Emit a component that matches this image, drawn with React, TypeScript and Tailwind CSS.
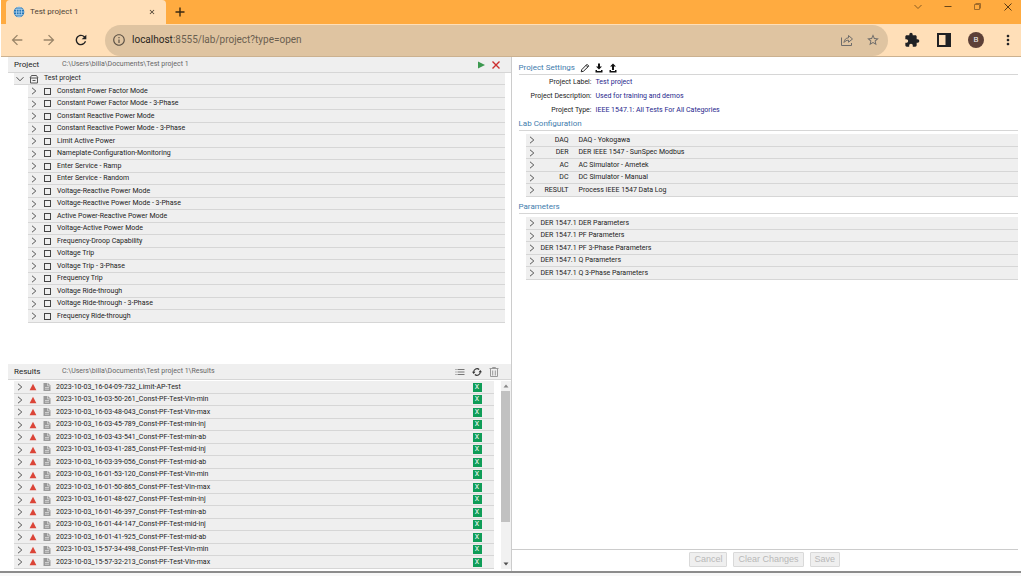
import type { ReactNode } from 'react'
import {
  MdArrowBack,
  MdArrowForward,
  MdClose,
  MdExtension,
  MdInfoOutline,
  MdMoreVert,
  MdRefresh,
  MdStarBorder,
} from 'react-icons/md'

const TESTS = [
  'Constant Power Factor Mode',
  'Constant Power Factor Mode - 3-Phase',
  'Constant Reactive Power Mode',
  'Constant Reactive Power Mode - 3-Phase',
  'Limit Active Power',
  'Nameplate-Configuration-Monitoring',
  'Enter Service - Ramp',
  'Enter Service - Random',
  'Voltage-Reactive Power Mode',
  'Voltage-Reactive Power Mode - 3-Phase',
  'Active Power-Reactive Power Mode',
  'Voltage-Active Power Mode',
  'Frequency-Droop Capability',
  'Voltage Trip',
  'Voltage Trip - 3-Phase',
  'Frequency Trip',
  'Voltage Ride-through',
  'Voltage Ride-through - 3-Phase',
  'Frequency Ride-through',
]

const RESULTS = [
  '2023-10-03_16-04-09-732_Limit-AP-Test',
  '2023-10-03_16-03-50-261_Const-PF-Test-Vin-min',
  '2023-10-03_16-03-48-043_Const-PF-Test-Vin-max',
  '2023-10-03_16-03-45-789_Const-PF-Test-min-inj',
  '2023-10-03_16-03-43-541_Const-PF-Test-min-ab',
  '2023-10-03_16-03-41-285_Const-PF-Test-mid-inj',
  '2023-10-03_16-03-39-056_Const-PF-Test-mid-ab',
  '2023-10-03_16-01-53-120_Const-PF-Test-Vin-min',
  '2023-10-03_16-01-50-865_Const-PF-Test-Vin-max',
  '2023-10-03_16-01-48-627_Const-PF-Test-min-inj',
  '2023-10-03_16-01-46-397_Const-PF-Test-min-ab',
  '2023-10-03_16-01-44-147_Const-PF-Test-mid-inj',
  '2023-10-03_16-01-41-925_Const-PF-Test-mid-ab',
  '2023-10-03_15-57-34-498_Const-PF-Test-Vin-min',
  '2023-10-03_15-57-32-213_Const-PF-Test-Vin-max',
]

const SETTINGS = [
  { label: 'Project Label:', value: 'Test project' },
  { label: 'Project Description:', value: 'Used for training and demos' },
  { label: 'Project Type:', value: 'IEEE 1547.1: All Tests For All Categories' },
]

const LAB = [
  { type: 'DAQ', name: 'DAQ - Yokogawa' },
  { type: 'DER', name: 'DER IEEE 1547 - SunSpec Modbus' },
  { type: 'AC', name: 'AC Simulator - Ametek' },
  { type: 'DC', name: 'DC Simulator - Manual' },
  { type: 'RESULT', name: 'Process IEEE 1547 Data Log' },
]

const PARAMETERS = [
  'DER 1547.1 DER Parameters',
  'DER 1547.1 PF Parameters',
  'DER 1547.1 PF 3-Phase Parameters',
  'DER 1547.1 Q Parameters',
  'DER 1547.1 Q 3-Phase Parameters',
]

function Expander({ name, open = false }: { name: string; open?: boolean }) {
  return (
    <button type="button" aria-label={`Expand ${name}`} aria-expanded={open} className="flex shrink-0">
      <svg className="h-2 w-2" viewBox="0 0 8 8" fill="none" stroke="#555" strokeWidth={1}>
        <path d={open ? 'M.5 2.2L4 5.8L7.5 2.2' : 'M2 .8L5.8 4L2 7.2'} />
      </svg>
    </button>
  )
}

function Row({ children }: { children: ReactNode }) {
  return (
    <li className="flex items-center border-b border-[#d6d6d6] bg-[#efefef] odd:h-[13px] even:h-3">
      {children}
    </li>
  )
}

function IconButton({ label, children }: { label: string; children: ReactNode }) {
  return (
    <button type="button" aria-label={label} className="flex shrink-0 items-center justify-center">
      {children}
    </button>
  )
}

function TitleBar() {
  return (
    <div className="flex h-6 bg-[#ffab40] pl-[5px]">
      <div className="flex w-40 items-center rounded-t bg-[#ffdfb8] pr-2.5 pl-[7px]">
        <svg className="h-3 w-3" viewBox="0 0 12 12">
          <circle cx="6" cy="6" r="5.3" fill="#2273b5" />
          <g fill="none" stroke="#c7e2f5" strokeWidth=".7">
            <ellipse cx="6" cy="6" rx="2.6" ry="5.3" />
            <path d="M6 .7V11.3M.7 6H11.3M1.6 3.3H10.4M1.6 8.7H10.4" />
          </g>
        </svg>
        <span className="ml-[5px] flex-1 text-[8px] text-[#4d4336]">Test project 1</span>
        <IconButton label="Close tab">
          <MdClose className="h-2 w-2 text-[#3c3226]" />
        </IconButton>
      </div>
      <button type="button" aria-label="New tab" className="ml-2">
        <svg className="h-3 w-3" viewBox="0 0 12 12" stroke="#3b2a12" strokeWidth={1.4}>
          <path d="M6 1.5V10.5M1.5 6H10.5" />
        </svg>
      </button>
      <div className="mr-2 ml-auto flex h-3.5 items-center gap-5">
        <IconButton label="Search tabs">
          <svg className="h-2.5 w-2.5" viewBox="0 0 10 10" fill="none" stroke="#8a5c22">
            <path d="M1.5 3L5 6.5L8.5 3" />
          </svg>
        </IconButton>
        <IconButton label="Minimize">
          <svg className="h-2.5 w-2.5" viewBox="0 0 10 10" stroke="#6b4719">
            <path d="M1.5 4.5H8.5" />
          </svg>
        </IconButton>
        <IconButton label="Restore">
          <svg className="h-2.5 w-2.5" viewBox="0 0 10 10" fill="none" stroke="#a06b2a">
            <path d="M1.5 2.5H6.5V7.5H1.5ZM2.5 1.5H7.5V6.5" />
          </svg>
        </IconButton>
        <IconButton label="Close">
          <svg className="h-2.5 w-2.5" viewBox="0 0 10 10" stroke="#5a3b14">
            <path d="M1.5 1.5L8.5 8.5M8.5 1.5L1.5 8.5" />
          </svg>
        </IconButton>
      </div>
    </div>
  )
}

function Toolbar() {
  return (
    <div className="flex h-[33px] items-center border-b border-[#cbb190] bg-[#ffdfb8] pr-[5px] pl-2">
      <div className="flex w-24 gap-4 text-[#9a8568]">
        <IconButton label="Back">
          <MdArrowBack className="h-4 w-4" />
        </IconButton>
        <IconButton label="Forward">
          <MdArrowForward className="h-4 w-4" />
        </IconButton>
        <IconButton label="Reload">
          <MdRefresh className="h-4 w-4 text-[#222]" />
        </IconButton>
      </div>
      <div className="flex h-[31px] flex-1 items-center rounded-full bg-[#dfc4a1] pr-2 pl-[7px]">
        <MdInfoOutline className="h-3.5 w-3.5 text-[#5b5145]" />
        <div className="ml-1.5 flex-1 text-[10px] leading-4">
          <span className="text-[#29241d]">localhost</span>
          <span className="text-[#6b5f50]">:8555/lab/project?type=open</span>
        </div>
        <div className="flex gap-3 text-[#6e6c6a]">
          <IconButton label="Share">
            <svg className="h-3.5 w-3.5" viewBox="0 0 14 14" fill="none" stroke="currentColor">
              <path d="M1.5 4.5V12.5H11.5V10M4 9.5C4.3 6.5 6 5 8.5 4.8V2.5L12.5 6L8.5 9.2V7.2C6.5 7.2 5.2 8 4 9.5Z" />
            </svg>
          </IconButton>
          <IconButton label="Bookmark">
            <MdStarBorder className="h-3.5 w-3.5" />
          </IconButton>
        </div>
      </div>
      <div className="ml-4 flex items-center gap-4 text-[#202124]">
        <IconButton label="Extensions">
          <MdExtension className="h-4 w-4" />
        </IconButton>
        <IconButton label="Side panel">
          <svg className="h-4 w-4" viewBox="0 0 16 16">
            <path fill="currentColor" fillRule="evenodd" d="M1 1H15V15H1ZM3 3V13H9.5V3Z" />
          </svg>
        </IconButton>
        <button
          type="button"
          className="h-4 w-4 rounded-full bg-[#5d4037] text-center text-[8px] leading-4 text-[#eee]"
        >
          B
        </button>
        <IconButton label="Menu">
          <MdMoreVert className="h-4 w-4" />
        </IconButton>
      </div>
    </div>
  )
}

function PanelHeader({ title, path, children }: { title: string; path: string; children: ReactNode }) {
  return (
    <div className="ml-2 flex h-4 items-center border-b border-[#d6d6d6] bg-[#efefef] pl-1.5">
      <h2 className="w-12 text-[8px]">{title}</h2>
      <span className="flex-1 text-[7px] text-[#666]">{path}</span>
      {children}
    </div>
  )
}

function ProjectPanel() {
  return (
    <section className="flex-1">
      <PanelHeader title="Project" path="C:\Users\billa\Documents\Test project 1">
        <div className="mr-2.5 flex gap-[5px]">
          <IconButton label="Run">
            <svg className="h-2.5 w-2.5" viewBox="0 0 10 10">
              <path fill="#3d9950" d="M2 1.5L9 5L2 8.5Z" />
            </svg>
          </IconButton>
          <IconButton label="Close project">
            <svg className="h-2.5 w-2.5" viewBox="0 0 10 10" stroke="#cc2f2f" strokeWidth={1.4}>
              <path d="M1.5 1.5L8.5 8.5M8.5 1.5L1.5 8.5" />
            </svg>
          </IconButton>
        </div>
      </PanelHeader>
      <div className="mr-1.5 ml-3.5">
        <div className="flex h-3 items-center border-b border-[#d6d6d6] bg-[#efefef] pl-0.5">
          <Expander name="Test project" open />
          <svg className="ml-[5px] h-2.5 w-2.5" viewBox="0 0 10 10" fill="none" stroke="#555">
            <path d="M2.5 1.5H7.5L9 4H1ZM1.5 4V9H8.5V4M3.5 6.5H6.5" />
          </svg>
          <span className="ml-[5px]">Test project</span>
        </div>
        <ul className="ml-3.5">
          {TESTS.map((test) => (
            <Row key={test}>
              <span className="ml-0.5 flex">
                <Expander name={test} />
              </span>
              <label className="ml-1.5 flex flex-1 items-center">
                <input type="checkbox" className="h-[7px] w-[7px] appearance-none border border-[#444]" />
                <span className="ml-1.5">{test}</span>
              </label>
            </Row>
          ))}
        </ul>
      </div>
    </section>
  )
}

function ResultsPanel() {
  return (
    <section className="pb-0.5">
      <PanelHeader title="Results" path="C:\Users\billa\Documents\Test project 1\Results">
        <div className="mr-3 flex gap-[7px]">
          <IconButton label="List view">
            <svg className="h-2.5 w-2.5" viewBox="0 0 10 10" stroke="#777">
              <path d="M.5 2.5H1.5M2.5 2.5H9.5M.5 5H1.5M2.5 5H9.5M.5 7.5H1.5M2.5 7.5H9.5" />
            </svg>
          </IconButton>
          <IconButton label="Refresh">
            <svg className="h-2.5 w-2.5" viewBox="0 0 10 10" fill="none" stroke="#333" strokeWidth={1.1}>
              <path d="M1.7 5A3.3 3.3 0 0 1 7.2 2.5M8.3 5A3.3 3.3 0 0 1 2.8 7.5" />
              <path fill="#333" stroke="none" d="M0 4.8H3.4L1.7 7ZM6.6 5.2H10L8.3 3Z" />
            </svg>
          </IconButton>
          <IconButton label="Delete">
            <svg className="h-2.5 w-2.5" viewBox="0 0 10 10" fill="none" stroke="#999">
              <path d="M.5 1.5H9.5M3.5 1V.5H6.5V1M1.5 2V9.5H8.5V2M3.7 3.5V8.5M6.3 3.5V8.5" />
            </svg>
          </IconButton>
        </div>
      </PanelHeader>
      <div className="flex pt-px pl-3.5">
        <ul className="flex-1">
          {RESULTS.map((result) => (
            <Row key={result}>
              <span className="ml-0.5 flex">
                <Expander name={result} />
              </span>
              <svg className="ml-[5px] h-2 w-2" viewBox="0 0 8 8">
                <path fill="#db4437" d="M4 .8L7.4 7.2H.6Z" />
              </svg>
              <svg className="ml-1.5 h-2 w-2" viewBox="0 0 8 8">
                <path fill="#999" d="M.5 0H5L7.5 2.5V8H.5Z" />
                <path fill="none" stroke="#e8e8e8" strokeWidth=".7" d="M4.6 0V2.9H7.5M2 4.5H6M2 6.2H6" />
              </svg>
              <span className="ml-[5px] flex-1">{result}</span>
              <button
                type="button"
                aria-label={`Open ${result} in Excel`}
                className="mr-3 h-[9px] w-[9px] bg-[#0f9d58] text-center text-[7px] leading-[9px] text-white"
              >
                X
              </button>
            </Row>
          ))}
        </ul>
        <div className="ml-[7px] flex w-2.5 flex-col items-center bg-[#f1f1f1]">
          <svg className="h-2.5 w-2.5" viewBox="0 0 10 10">
            <path fill="#888" d="M2.5 6.5L5 3.5L7.5 6.5Z" />
          </svg>
          <div className="h-[131px] w-[9px] bg-[#c1c1c1]" />
          <svg className="mt-auto h-2.5 w-2.5" viewBox="0 0 10 10">
            <path fill="#505050" d="M2.5 3.5L5 6.5L7.5 3.5Z" />
          </svg>
        </div>
      </div>
    </section>
  )
}

function SectionTitle({ title, children }: { title: string; children?: ReactNode }) {
  return (
    <div className="flex h-[13px] items-center border-b border-[#d6d6d6]">
      <h2 className="text-[8px] text-[#3f7cad]">{title}</h2>
      {children}
    </div>
  )
}

function SettingsPanel() {
  return (
    <section className="flex flex-1 flex-col pr-[3px]">
      <div className="flex-1 pt-[5px] pl-[7px]">
        <SectionTitle title="Project Settings">
          <div className="ml-[5px] flex gap-1">
            <IconButton label="Edit">
              <svg className="h-2.5 w-2.5" viewBox="0 0 10 10" fill="none" stroke="#222">
                <path d="M1.2 8.8L1.8 6.6L7 1.3L8.8 3.1L3.5 8.2ZM6 2.3L7.7 4" />
              </svg>
            </IconButton>
            <IconButton label="Download">
              <svg className="h-2.5 w-2.5" viewBox="0 0 10 10" fill="#111">
                <path d="M4 .5H6V3.5H8L5 6.5L2 3.5H4ZM1.5 7H3V8H7V7H8.5V9.5H1.5Z" />
              </svg>
            </IconButton>
            <IconButton label="Upload">
              <svg className="h-2.5 w-2.5" viewBox="0 0 10 10" fill="#111">
                <path d="M4 7H6V3.5H8L5 .5L2 3.5H4ZM1.5 7H3V8H7V7H8.5V9.5H1.5Z" />
              </svg>
            </IconButton>
          </div>
        </SectionTitle>
        <dl className="pb-px">
          {SETTINGS.map(({ label, value }) => (
            <div key={label} className="flex h-3.5 items-center">
              <dt className="w-[73px] text-right">{label}</dt>
              <dd className="ml-1 text-[#26268c]">{value}</dd>
            </div>
          ))}
        </dl>
        <SectionTitle title="Lab Configuration" />
        <ul className="mt-[3px] mb-1 ml-[7px]">
          {LAB.map(({ type, name }) => (
            <Row key={type}>
              <span className="ml-0.5 flex">
                <Expander name={name} />
              </span>
              <span className="w-[33px] text-right">{type}</span>
              <span className="ml-2.5">{name}</span>
            </Row>
          ))}
        </ul>
        <SectionTitle title="Parameters" />
        <ul className="mt-[3px] ml-[7px]">
          {PARAMETERS.map((name) => (
            <Row key={name}>
              <span className="ml-0.5 flex">
                <Expander name={name} />
              </span>
              <span className="ml-[5px]">{name}</span>
            </Row>
          ))}
        </ul>
      </div>
      <div className="flex justify-center gap-1.5 border-t border-[#ccc] pt-0.5 pb-1 font-['Liberation_Sans',sans-serif] text-[9px] leading-[13px] text-[#b8b8b8]">
        {['Cancel', 'Clear Changes', 'Save'].map((action) => (
          <button
            key={action}
            type="button"
            disabled
            className="rounded-[1px] border border-[#d9d9d9] bg-[#efefef] px-1"
          >
            {action}
          </button>
        ))}
      </div>
    </section>
  )
}

export default function App() {
  return (
    <div className="flex min-h-screen flex-col bg-white font-['Roboto',sans-serif] text-[7px] leading-none text-[#222]">
      <header className="pl-px">
        <TitleBar />
        <Toolbar />
      </header>
      <main className="flex flex-1">
        <div className="flex w-[50.1%] flex-col border-r border-[#ccc]">
          <ProjectPanel />
          <ResultsPanel />
        </div>
        <SettingsPanel />
      </main>
      <footer className="h-[5px] border-t-2 border-[#8c8c8c] bg-[#f8f8f8]" />
    </div>
  )
}
